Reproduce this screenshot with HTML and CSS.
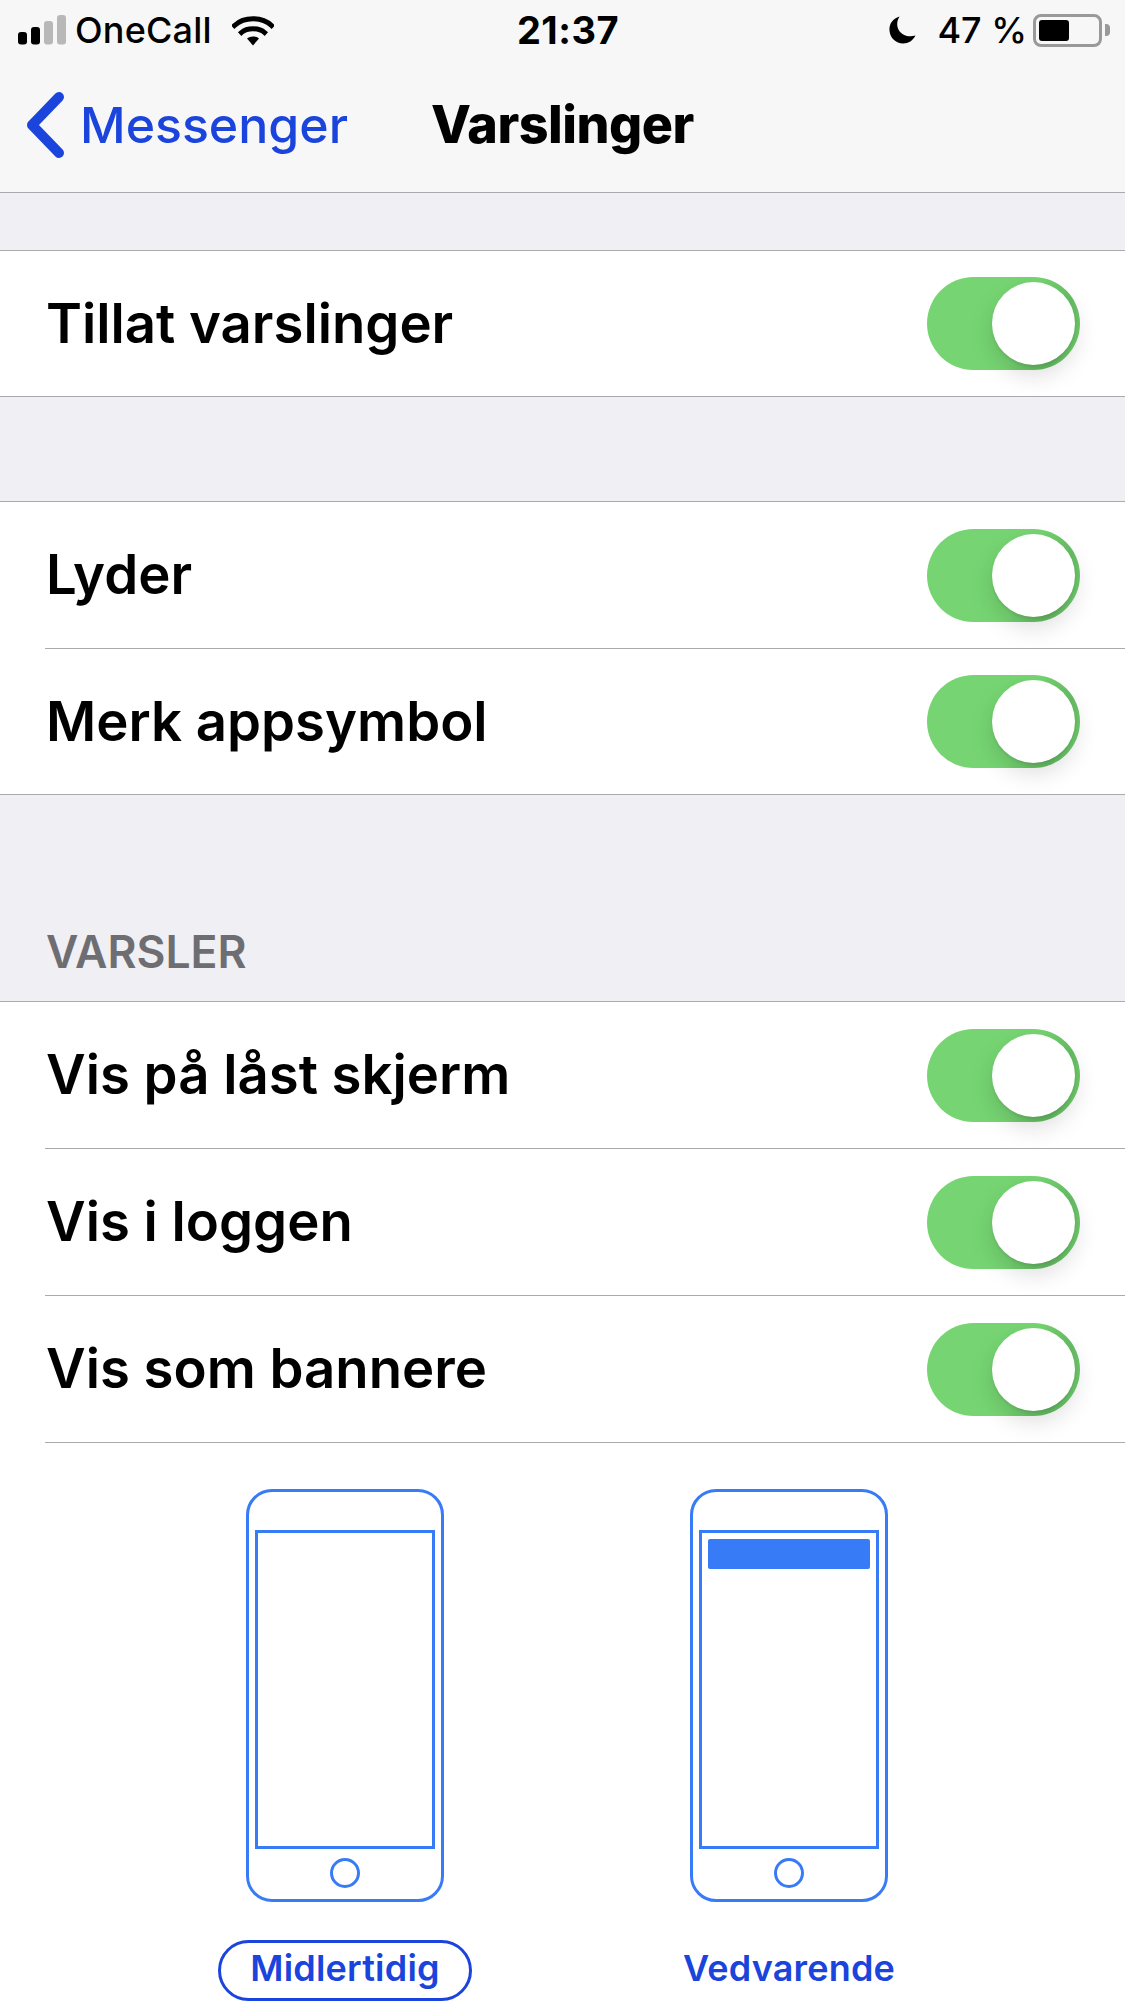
FILE: index.html
```html
<!DOCTYPE html>
<html lang="nb">

<head>
    <meta charset="UTF-8">
    <meta name="viewport" content="width=device-width, initial-scale=1.0">
    <title>Varslinger</title>
    <link rel="stylesheet" href="styles.css">
</head>

<body>
    <header class="top">
        <div class="status-bar">
            <div class="status-left">
                <svg class="signal" width="48" height="30" viewBox="0 0 48 30">
                    <rect x="0" y="17" width="9" height="12.500" rx="3" fill="#000" />
                    <rect x="13" y="12" width="9" height="17.500" rx="3" fill="#000" />
                    <rect x="26" y="6" width="9" height="23.500" rx="3" fill="#b8b8b8" />
                    <rect x="39" y="0" width="9" height="29.500" rx="3" fill="#b8b8b8" />
                </svg>
                <span class="carrier">OneCall</span>
                <svg class="wifi" width="42" height="31" viewBox="0 0 42 31">
                    <path d="M2.500 10.500C12 1.500 30 1.500 39.500 10.500" fill="none" stroke="#000" stroke-width="5" stroke-linecap="square" />
                    <path d="M9.500 17.500C15 12.500 27 12.500 32.500 17.500" fill="none" stroke="#000" stroke-width="5" stroke-linecap="square" />
                    <path d="M15 23.500C18 20.800 24 20.800 27 23.500L21 30.500Z" fill="#000" />
                </svg>
            </div>
            <div class="clock">21:37</div>
            <div class="status-right">
                <svg class="moon" width="27" height="28" viewBox="0 0 27 28">
                    <path d="M10.500 0.500C3.500 3 0 8 0.500 14.500C1 22 7 27.500 14 27.500C19.500 27.500 24 24.500 26.500 19.500C18.500 22 11 18.500 8.800 12C7.500 8 8.300 3.800 10.500 0.500Z" fill="#000" />
                </svg>
                <span class="battery-text">47 %</span>
                <div class="battery">
                    <div class="battery-fill"></div>
                </div>
            </div>
        </div>
        <nav class="nav-bar">
            <div class="back">
                <svg class="chevron" width="38" height="66" viewBox="0 0 38 66">
                    <path d="M33 5L6 33L33 61" fill="none" stroke="#1a44db" stroke-width="10" stroke-linecap="round" stroke-linejoin="round" />
                </svg>
                <span>Messenger</span>
            </div>
            <h1>Varslinger</h1>
        </nav>
    </header>

    <main>
        <div class="spacer first"></div>
        <section class="group">
            <div class="row last">
                <span class="row-label">Tillat varslinger</span>
                <div class="toggle"><div class="knob"></div></div>
            </div>
        </section>

        <div class="spacer"></div>
        <section class="group">
            <div class="row">
                <span class="row-label">Lyder</span>
                <div class="toggle"><div class="knob"></div></div>
            </div>
            <div class="row last">
                <span class="row-label">Merk appsymbol</span>
                <div class="toggle"><div class="knob"></div></div>
            </div>
        </section>

        <div class="section-head">VARSLER</div>
        <section class="group open">
            <div class="row">
                <span class="row-label">Vis på låst skjerm</span>
                <div class="toggle"><div class="knob"></div></div>
            </div>
            <div class="row">
                <span class="row-label">Vis i loggen</span>
                <div class="toggle"><div class="knob"></div></div>
            </div>
            <div class="row">
                <span class="row-label">Vis som bannere</span>
                <div class="toggle"><div class="knob"></div></div>
            </div>
        </section>

        <section class="styles">
            <div class="style-item">
                <div class="phone">
                    <div class="screen"></div>
                    <div class="home"></div>
                </div>
                <div class="style-label selected">Midlertidig</div>
            </div>
            <div class="style-item">
                <div class="phone">
                    <div class="screen">
                        <div class="banner"></div>
                    </div>
                    <div class="home"></div>
                </div>
                <div class="style-label">Vedvarende</div>
            </div>
        </section>
    </main>
</body>

</html>
```

FILE: styles.css
```css
:root {
    --blue: #1a44db;
    --line-blue: #387bf6;
    --line: #a9a9ae;
    --group-bg: #efeff4;
    --green: #76d572;
}

* {
    margin: 0;
    padding: 0;
    box-sizing: border-box;
}

html,
body {
    height: 2001px;
    overflow: hidden;
}

body {
    font-family: Inter, 'Noto Sans', sans-serif;
    background-color: white;
    color: black;
}

/* Top bars */
.top {
    height: 193px;
    background-color: #f7f7f7;
    border-bottom: 1px solid var(--line);
}

.status-bar {
    height: 60px;
    display: grid;
    grid-template-columns: 1fr auto 1fr;
    align-items: center;
    padding: 0 23px 0 18px;
    font-size: 36px;
}

.status-left {
    display: flex;
    align-items: center;
}

.carrier {
    margin-left: 9px;
    font-weight: 500;
    letter-spacing: 0.2px;
}

.wifi {
    margin-left: 20px;
}

.clock {
    font-weight: 700;
    font-size: 38px;
    margin-left: 16px;
    letter-spacing: 0.5px;
}

.status-right {
    display: flex;
    align-items: center;
    justify-content: flex-end;
}

.battery-text {
    margin-left: 21px;
    font-weight: 500;
}

.battery {
    position: relative;
    width: 69px;
    height: 33px;
    margin-left: 6px;
    border: 3px solid #999;
    border-radius: 8px;
    padding: 3px;
}

/* battery nub */
.battery::after {
    content: "";
    position: absolute;
    right: -11px;
    top: 7px;
    width: 5px;
    height: 12px;
    background-color: #999;
    border-radius: 0 4px 4px 0;
}

.battery-fill {
    width: 30px;
    height: 100%;
    background-color: black;
    border-radius: 3px;
}

.nav-bar {
    height: 132px;
    display: grid;
    grid-template-columns: 1fr auto 1fr;
    align-items: center;
    padding-bottom: 3px;
}

.back {
    display: flex;
    align-items: center;
    gap: 16px;
    margin-left: 26px;
    color: var(--blue);
    font-size: 50px;
    font-weight: 500;
}

h1 {
    font-size: 52px;
    font-weight: 800;
    letter-spacing: -0.5px;
}

/* Groups */
.spacer {
    height: 105px;
    background-color: var(--group-bg);
    border-bottom: 1px solid var(--line);
}

.spacer.first {
    height: 58px;
}

.section-head {
    height: 207px;
    background-color: var(--group-bg);
    border-bottom: 1px solid var(--line);
    padding: 0 46px 22px;
    display: flex;
    align-items: flex-end;
    color: #6d6d72;
    font-size: 44.500px;
    font-weight: 600;
}

.group {
    padding-left: 45px;
    border-bottom: 1px solid var(--line);
}

.group.open {
    border-bottom: none;
}

.row {
    height: 147px;
    display: flex;
    align-items: center;
    justify-content: space-between;
    padding-right: 45px;
    border-bottom: 1px solid var(--line);
}

.row.last {
    height: 145px;
    border-bottom: none;
}

.row-label {
    padding: 0 0 2px 1px;
    font-size: 54.500px;
    font-weight: 600;
}

/* Switch */
.toggle {
    position: relative;
    width: 153px;
    height: 93px;
    border-radius: 47px;
    background: linear-gradient(110deg, var(--green) 60%, #66bd64 82%, var(--green) 100%);
}

.knob {
    position: absolute;
    top: 5px;
    right: 5px;
    width: 83px;
    height: 83px;
    border-radius: 50%;
    background-color: white;
    box-shadow: 0 10px 24px rgba(0, 0, 0, 0.14), 0 2px 3px rgba(0, 0, 0, 0.08);
}

/* Banner style picker */
.styles {
    display: grid;
    grid-template-columns: 444px 444px;
    padding: 46px 0 0 123px;
}

.style-item {
    display: flex;
    flex-direction: column;
    align-items: center;
}

.phone {
    width: 198px;
    height: 413px;
    padding-top: 38px;
    border: 3px solid var(--line-blue);
    border-radius: 26px;
    display: flex;
    flex-direction: column;
    align-items: center;
}

.screen {
    width: 180px;
    height: 319px;
    border: 3px solid var(--line-blue);
    padding: 6px;
}

.banner {
    height: 30px;
    background-color: var(--line-blue);
    border-radius: 2px;
}

.home {
    width: 30px;
    height: 30px;
    margin-top: 9px;
    border: 3px solid var(--line-blue);
    border-radius: 50%;
}

.style-label {
    margin-top: 38px;
    height: 61px;
    padding: 0 29px 6px;
    border: 3px solid transparent;
    border-radius: 31px;
    color: var(--blue);
    font-size: 36px;
    font-weight: 600;
    letter-spacing: 0.2px;
    display: flex;
    align-items: center;
}

.style-label.selected {
    border-color: var(--blue);
}
```
